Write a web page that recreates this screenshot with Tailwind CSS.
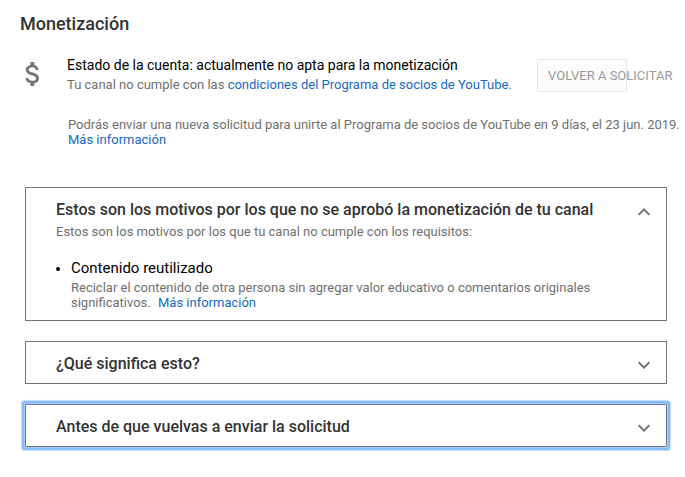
<!DOCTYPE html>
<html lang="es">
<head>
<meta charset="utf-8">
<meta name="viewport" content="width=device-width, initial-scale=1">
<title>Monetización</title>
<script src="https://cdn.jsdelivr.net/npm/@tailwindcss/browser@4"></script>
</head>
<body class="bg-white font-[Roboto,sans-serif] text-[13px] leading-[15px] text-[#707070]">
<main class="pt-3 pb-7">
  <h1 class="pl-5 text-lg leading-6 font-medium text-[#333]">Monetización</h1>

  <section class="mt-[19px] flex items-start pl-[17px]">
    <svg class="mt-[3px] size-8 shrink-0" viewBox="0 0 24 24" fill="#757575" aria-hidden="true"><path d="M11.8 10.9c-2.27-.59-3-1.2-3-2.15 0-1.09 1.01-1.85 2.7-1.85 1.78 0 2.44.85 2.5 2.1h2.21c-.07-1.72-1.12-3.3-3.21-3.81V3h-3v2.16c-1.94.42-3.5 1.68-3.5 3.61 0 2.31 1.91 3.46 4.7 4.13 2.5.6 3 1.48 3 2.41 0 .69-.49 1.79-2.7 1.79-2.06 0-2.87-.92-2.98-2.1h-2.2c.12 2.19 1.76 3.42 3.68 3.83V21h3v-2.15c1.95-.37 3.5-1.5 3.5-3.55 0-2.84-2.43-3.81-4.7-4.4z"/></svg>
    <div class="ml-[18px] min-w-0 flex-1">
      <div class="flex items-start justify-between pr-[58px]">
        <div>
          <h2 class="text-sm leading-5 text-black">Estado de la cuenta: actualmente no apta para la monetización</h2>
          <p class="mt-[2px]">Tu canal no cumple con las <a href="#" class="text-[#136bc0]">condiciones del Programa de socios de YouTube</a>.</p>
        </div>
        <button type="button" disabled class="mt-1 h-[33px] w-[90px] shrink-0 rounded-xs border border-[#e5e5e5] bg-[#fcfcfc] pl-[10px] text-left text-[13px] whitespace-nowrap text-[#999]">VOLVER A SOLICITAR</button>
      </div>
      <p class="mt-[25px] pl-px whitespace-nowrap">Podrás enviar una nueva solicitud para unirte al Programa de socios de YouTube en 9 días, el 23 jun. 2019.<br><a href="#" class="text-[#136bc0]">Más información</a></p>
    </div>
  </section>

  <div class="mt-10 mr-[18px] ml-[25px] flex flex-col gap-5">
    <section class="border border-[#757575] pb-[10px]">
      <h2><button type="button" aria-expanded="true" aria-controls="motivos" class="flex w-full items-start justify-between pt-3 pr-[10px] pl-[30px] text-left text-base leading-5 font-medium text-[#333]">
        Estos son los motivos por los que no se aprobó la monetización de tu canal
        <svg class="-mb-4 size-6 shrink-0" viewBox="0 0 24 24" fill="#757575" aria-hidden="true"><path d="M12 8l-6 6 1.41 1.41L12 10.83l4.59 4.58L18 14z"/></svg>
      </button></h2>
      <div id="motivos" class="pr-[60px] pl-[30px]">
        <p class="mt-1">Estos son los motivos por los que tu canal no cumple con los requisitos:</p>
        <ul class="mt-[19px] list-disc pl-[15px] marker:text-[14px] marker:text-black">
          <li class="text-[15px] leading-5 text-black">
            <h3>Contenido reutilizado</h3>
            <p class="mt-[2px] text-[13px] leading-[15px] text-[#707070]">Reciclar el contenido de otra persona sin agregar valor educativo o comentarios originales significativos. <a href="#" class="ml-1 text-[#136bc0]">Más información</a></p>
          </li>
        </ul>
      </div>
    </section>

    <h2 class="border border-[#757575]"><button type="button" aria-expanded="false" class="flex w-full items-start justify-between pt-[11px] pr-[10px] pb-2 pl-[30px] text-left text-base leading-[22px] font-medium text-[#333]">
      ¿Qué significa esto?
      <svg class="-mb-4 size-6 shrink-0" viewBox="0 0 24 24" fill="#757575" aria-hidden="true"><path d="M16.59 8.59L12 13.17 7.41 8.59 6 10l6 6 6-6z"/></svg>
    </button></h2>

    <h2 class="rounded-[1px] border border-[#6d7680] shadow-[0_0_0_1px_#a9cefb,0_0_0_3px_#85bbfd,0_0_1px_4px_#c5dffd]"><button type="button" aria-expanded="false" class="flex w-full items-start justify-between pt-[11px] pr-[10px] pb-2 pl-[30px] text-left text-base leading-[22px] font-medium text-[#333]">
      Antes de que vuelvas a enviar la solicitud
      <svg class="-mb-4 size-6 shrink-0" viewBox="0 0 24 24" fill="#757575" aria-hidden="true"><path d="M16.59 8.59L12 13.17 7.41 8.59 6 10l6 6 6-6z"/></svg>
    </button></h2>
  </div>
</main>
</body>
</html>
